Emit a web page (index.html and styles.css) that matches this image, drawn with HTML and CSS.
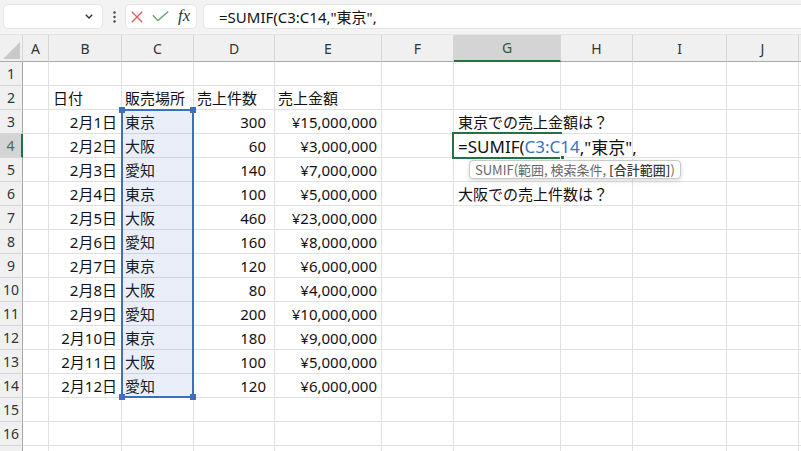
FILE: index.html
```html
<!DOCTYPE html>
<html lang="ja">
<head>
<meta charset="utf-8">
<title>SUMIF</title>
<link rel="stylesheet" href="styles.css">
</head>
<body>
<div class="toolbar">
  <div class="namebox">
    <svg width="8" height="5" viewBox="0 0 8 5"><path d="M0.8 0.8L4 4L7.2 0.8" fill="none" stroke="#333" stroke-width="1.4"/></svg>
  </div>
  <div class="dots">
    <svg width="3" height="12" viewBox="0 0 3 12"><circle cx="1.5" cy="1.5" r="1.2" fill="#444"/><circle cx="1.5" cy="6" r="1.2" fill="#444"/><circle cx="1.5" cy="10.5" r="1.2" fill="#444"/></svg>
  </div>
  <div class="btns">
    <svg width="12" height="12" viewBox="0 0 12 12"><path d="M0.8 0.8L11.2 11.2M11.2 0.8L0.8 11.2" fill="none" stroke="#dd5c5c" stroke-width="1.3"/></svg>
    <svg width="17" height="11" viewBox="0 0 17 11"><path d="M0.8 4.2L6 9.6L16.2 0.6" fill="none" stroke="#5fa46e" stroke-width="1.3"/></svg>
    <span class="fx">fx</span>
  </div>
  <div class="formula">=SUMIF(C3:C14,"東京",</div>
</div>

<div class="grid">
  <span class="hd corner"><svg width="17" height="17" viewBox="0 0 17 17"><polygon points="17,0 17,17 0,17" fill="#c9c9c9"/></svg></span><span class="hd">A</span><span class="hd">B</span><span class="hd">C</span><span class="hd">D</span><span class="hd">E</span><span class="hd">F</span><span class="hd on">G</span><span class="hd">H</span><span class="hd">I</span><span class="hd">J</span><span class="hd"></span>

  <span class="rn">1</span><span></span><span></span><span></span><span></span><span></span><span></span><span></span><span></span><span></span><span></span><span></span>

  <span class="rn">2</span><span></span><span class="t">日付</span><span>販売場所</span><span>売上件数</span><span>売上金額</span><span></span><span></span><span></span><span></span><span></span><span></span>

  <span class="rn">3</span><span></span><span class="r">2月1日</span><span>東京</span><span class="r d">300</span><span class="r">¥15,000,000</span><span></span><span class="ov">東京での売上金額は？</span><span></span><span></span><span></span><span></span>

  <span class="rn on">4</span><span></span><span class="r">2月2日</span><span>大阪</span><span class="r d">60</span><span class="r">¥3,000,000</span><span></span><span class="ov ed">=SUMIF(<em class="ref">C3:C14</em>,"東京",<i class="caret"></i></span><span></span><span></span><span></span><span></span>

  <span class="rn">5</span><span></span><span class="r">2月3日</span><span>愛知</span><span class="r d">140</span><span class="r">¥7,000,000</span><span></span><span></span><span></span><span></span><span></span><span></span>

  <span class="rn">6</span><span></span><span class="r">2月4日</span><span>東京</span><span class="r d">100</span><span class="r">¥5,000,000</span><span></span><span class="ov">大阪での売上件数は？</span><span></span><span></span><span></span><span></span>

  <span class="rn">7</span><span></span><span class="r">2月5日</span><span>大阪</span><span class="r d">460</span><span class="r">¥23,000,000</span><span></span><span></span><span></span><span></span><span></span><span></span>

  <span class="rn">8</span><span></span><span class="r">2月6日</span><span>愛知</span><span class="r d">160</span><span class="r">¥8,000,000</span><span></span><span></span><span></span><span></span><span></span><span></span>

  <span class="rn">9</span><span></span><span class="r">2月7日</span><span>東京</span><span class="r d">120</span><span class="r">¥6,000,000</span><span></span><span></span><span></span><span></span><span></span><span></span>

  <span class="rn">10</span><span></span><span class="r">2月8日</span><span>大阪</span><span class="r d">80</span><span class="r">¥4,000,000</span><span></span><span></span><span></span><span></span><span></span><span></span>

  <span class="rn">11</span><span></span><span class="r">2月9日</span><span>愛知</span><span class="r d">200</span><span class="r">¥10,000,000</span><span></span><span></span><span></span><span></span><span></span><span></span>

  <span class="rn">12</span><span></span><span class="r">2月10日</span><span>東京</span><span class="r d">180</span><span class="r">¥9,000,000</span><span></span><span></span><span></span><span></span><span></span><span></span>

  <span class="rn">13</span><span></span><span class="r">2月11日</span><span>大阪</span><span class="r d">100</span><span class="r">¥5,000,000</span><span></span><span></span><span></span><span></span><span></span><span></span>

  <span class="rn">14</span><span></span><span class="r">2月12日</span><span>愛知</span><span class="r d">120</span><span class="r">¥6,000,000</span><span></span><span></span><span></span><span></span><span></span><span></span>

  <span class="rn">15</span><span></span><span></span><span></span><span></span><span></span><span></span><span></span><span></span><span></span><span></span><span></span>

  <span class="rn">16</span><span></span><span></span><span></span><span></span><span></span><span></span><span></span><span></span><span></span><span></span><span></span>

  <span class="rn"></span><span></span><span></span><span></span><span></span><span></span><span></span><span></span><span></span><span></span><span></span><span></span>

  <div class="sel"><i class="hdl tl"></i><i class="hdl tr"></i><i class="hdl bl"></i><i class="hdl br"></i></div>
  <div class="act"><i class="fill"></i></div>
  <div class="tip">SUMIF(範囲, 検索条件, <b>[合計範囲]</b>)</div>
</div>
</body>
</html>
```
FILE: styles.css
```css
* { box-sizing: border-box; }

body {
  margin: 0;
  width: 801px;
  height: 451px;
  overflow: hidden;
  background: #fff;
  font-family: "Noto Sans", "Noto Sans CJK JP", sans-serif;
  color: #111;
}

/* ---------- formula bar ---------- */
.toolbar {
  height: 35px;
  display: flex;
  align-items: flex-start;
  padding: 4px 0 0 3px;
  background: #f3f3f3;
  border-bottom: 1px solid #e4e4e4;
}

.namebox {
  width: 100px;
  height: 25px;
  background: #fff;
  border: 1px solid #e6e6e6;
  border-radius: 5px;
  display: flex;
  align-items: center;
  justify-content: flex-end;
  padding-right: 9px;
}

.dots {
  width: 22px;
  height: 25px;
  display: flex;
  align-items: center;
  justify-content: center;
}

.btns {
  width: 72px;
  height: 25px;
  background: #fff;
  border: 1px solid #e6e6e6;
  border-radius: 5px;
  display: flex;
  align-items: center;
  padding-left: 5px;
  gap: 9px;
}

.fx {
  font-family: "Liberation Serif", serif;
  font-style: italic;
  font-size: 17px;
  color: #333;
  line-height: 1;
  margin-top: -2px;
}

.formula {
  flex: 1;
  margin-left: 6px;
  height: 25px;
  background: #fff;
  border: 1px solid #e6e6e6;
  border-right: none;
  border-radius: 5px 0 0 5px;
  display: flex;
  align-items: center;
  padding-left: 15px;
  font-size: 15px;
  color: #111;
  white-space: nowrap;
}

/* ---------- sheet grid ---------- */
.grid {
  position: relative;
  display: grid;
  grid-template-columns: 23px 26px 73px 72px 81px 107px 72px 107px 72px 94px 72px 1fr;
  grid-template-rows: 27px;
  grid-auto-rows: 24px;
}

.grid > span {
  border-right: 1px solid #e1e1e1;
  border-bottom: 1px solid #e1e1e1;
  display: flex;
  align-items: center;
  padding: 0 3px;
  white-space: nowrap;
  font-size: 15px;
  color: #111;
  min-width: 0;
}

.grid > span.t { padding-left: 4px; }
.grid > span.r { justify-content: flex-end; padding-right: 4px; }
.grid > span.d { padding-right: 8px; }
.grid > span.ov { border-right-color: transparent; padding-left: 4px; }
.grid > span.ed { font-size: 17px; padding-top: 1px; }

.grid > span.hd {
  background: #f0f0f0;
  justify-content: center;
  border-right-color: #d6d6d6;
  border-bottom-color: #a9a9a9;
  font-size: 14px;
  color: #333;
  padding: 0;
}

.grid > span.corner {
  justify-content: flex-end;
  align-items: flex-end;
  padding: 0 2px 2px 0;
}

.grid > span.rn {
  background: #f0f0f0;
  justify-content: center;
  border-right-color: #a9a9a9;
  border-bottom-color: #d6d6d6;
  font-size: 14px;
  color: #333;
  padding: 0;
}

.grid > span.hd.on {
  background: #d4d4d4;
  border-bottom: 2px solid #217346;
  color: #2a5b40;
}

.grid > span.rn.on {
  background: #d4d4d4;
  border-right: 2px solid #217346;
  color: #4d6b5b;
}

.ref { font-style: normal; color: #3b6fc2; }

.caret {
  display: inline-block;
  width: 1px;
  height: 19px;
  background: #000;
  margin-left: 1px;
}

/* ---------- overlays ---------- */
.sel {
  position: absolute;
  grid-column: 4 / 5;
  grid-row: 4 / 16;
  left: -1px;
  top: -1px;
  right: 0;
  bottom: 0;
  border: 2px solid #3c6ec2;
  background: rgba(70, 114, 196, 0.12);
}

.hdl {
  position: absolute;
  width: 6px;
  height: 6px;
  background: #3c6ec2;
}
.hdl.tl { left: -4px; top: -4px; }
.hdl.tr { right: -4px; top: -4px; }
.hdl.bl { left: -4px; bottom: -4px; }
.hdl.br { right: -4px; bottom: -4px; }

.act {
  position: absolute;
  grid-column: 8 / 9;
  grid-row: 5 / 6;
  left: -2px;
  top: -2px;
  right: -1px;
  bottom: -1px;
  border: 2px solid #217346;
  border-right: none;
}

.fill {
  position: absolute;
  right: -3px;
  bottom: -3px;
  width: 5px;
  height: 5px;
  background: #217346;
  border: 1px solid #fff;
}

.tip {
  position: absolute;
  grid-column: 8 / 13;
  grid-row: 6 / 7;
  left: 15px;
  top: 2px;
  height: 19px;
  padding: 0 5px;
  background: #fff;
  border: 1px solid #c9c9c9;
  border-radius: 4px;
  box-shadow: 0 2px 5px rgba(0, 0, 0, 0.14);
  font-family: "Noto Sans CJK JP", sans-serif;
  font-size: 13px;
  line-height: 17px;
  color: #666;
  white-space: nowrap;
}

.tip b { color: #3a3a3a; font-weight: 500; }
```
